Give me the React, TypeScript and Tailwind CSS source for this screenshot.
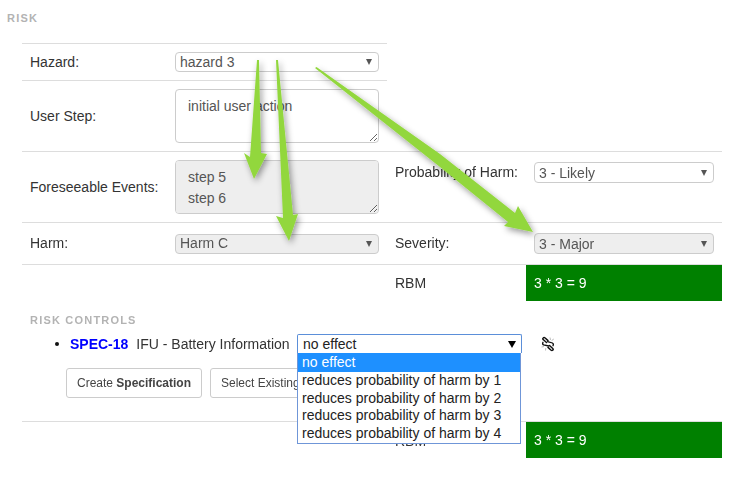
function Sel({ text, gray, w, h = "h-[21px]", low }: { text: string; gray?: boolean; w: string; h?: string; low?: boolean }) {
  return (
    <div className={`flex items-center justify-between rounded-[4px] border border-[#cccccc] pl-1 pr-[6px] text-[14px] text-[#555555] ${w} ${h} ${gray ? "bg-[#eeeeee]" : "bg-white"}`}>
      <span className={low ? "pt-[2px]" : ""}>{text}</span>
      <span className="h-0 w-0 border-x-[3.5px] border-t-[6px] border-x-transparent border-t-[#555555]" />
    </div>
  );
}

function Area({ value, gray, h }: { value: string; gray?: boolean; h: string }) {
  return (
    <textarea
      readOnly
      value={value}
      className={`block w-[204px] rounded-[4px] border border-[#cccccc] px-3 py-[6px] text-[14px] leading-[21px] text-[#555555] outline-none ${h} ${gray ? "bg-[#eeeeee]" : "bg-white"}`}
    />
  );
}

function Green() {
  return <div className="flex h-[36px] w-[196px] items-center bg-[#008000] px-2 text-[14px] text-white">3 * 3 = 9</div>;
}

export default function App() {
  return (
    <div className="relative h-[482px] w-[748px] overflow-hidden bg-white font-['Liberation_Sans',Arial,sans-serif] text-[14px] text-[#333333]">
      <div className="pl-[7px] pt-[12px] text-[11px] font-bold leading-[13px] tracking-[1.2px] text-[#b3b3b3]">RISK</div>

      <div className="ml-[22px] mt-[18px] w-[700px]">
        <div className="flex h-[37px] w-[365px] items-center border-t border-[#dddddd] pl-2">
          <span className="w-[145px]">Hazard:</span>
          <Sel text="hazard 3" w="w-[204px]" h="h-[20px]" />
        </div>
        <div className="flex h-[71px] w-[365px] items-center border-t border-[#dddddd] pl-2">
          <span className="w-[145px]">User Step:</span>
          <Area value="initial user action" h="h-[54px]" />
        </div>
        <div className="flex h-[71px] border-t border-[#dddddd]">
          <div className="flex w-[365px] items-center pl-2">
            <span className="w-[145px]">Foreseeable Events:</span>
            <Area value={"step 5\nstep 6"} gray h="h-[54px]" />
          </div>
          <div className="flex items-start pl-2 pt-[10px]">
            <span className="w-[139px]">Probability of Harm:</span>
            <Sel text="3 - Likely" w="w-[180px]" low />
          </div>
        </div>
        <div className="flex h-[42px] border-t border-[#dddddd]">
          <div className="flex w-[365px] items-center pl-2">
            <span className="w-[145px]">Harm:</span>
            <Sel text="Harm C" gray w="w-[204px]" h="h-[20px]" />
          </div>
          <div className="flex items-start pl-2 pt-[10px]">
            <span className="w-[139px]">Severity:</span>
            <Sel text="3 - Major" gray w="w-[180px]" low />
          </div>
        </div>
        <div className="flex border-t border-[#dddddd]">
          <div className="w-[365px]" />
          <div className="flex w-[335px] items-center pl-2">
            <span className="w-[131px]">RBM</span>
            <Green />
          </div>
        </div>
      </div>

      <div className="ml-[30px] mt-[13px] text-[11px] font-bold leading-[13px] tracking-[1.2px] text-[#b3b3b3]">RISK CONTROLS</div>

      <div className="ml-[55px] mt-[7px] flex h-[20px] items-center">
        <span className="mr-[11px] h-[4px] w-[4px] rounded-full bg-[#111111]" />
        <span className="font-bold text-[#0000ff]">SPEC-18</span>
        <span className="ml-2 w-[169px]">IFU - Battery Information</span>
        <svg className="ml-[235px]" width="16" height="16" viewBox="0 0 16 16" fill="none">
          <path d="M6.5 6.5 L3.5 3.8 Q2.2 2.8 3.2 2 Q4 1.2 5.2 2 L8 4.6" stroke="#111" strokeWidth="1.5" strokeLinecap="round" />
          <path d="M3 6.2 Q2 8 3.6 9 L8.8 10" stroke="#111" strokeWidth="1.3" strokeLinecap="round" />
          <path d="M9.5 9.5 L12.5 12.2 Q13.8 13.4 12.8 14 Q12 14.8 10.8 14 L8 11.4" stroke="#111" strokeWidth="1.5" strokeLinecap="round" />
          <path d="M13 9.8 Q14 8 12.4 7 L7.6 5.6" stroke="#111" strokeWidth="1.3" strokeLinecap="round" />
          <path d="M10 1.5 L10.5 4 M13.8 3 L11.6 4.6 M1.5 11 L4 10.6 M5.5 14.5 L5.8 12" stroke="#bbb" strokeWidth="1" />
        </svg>
      </div>

      <div className="ml-[66px] mt-[14px] flex gap-2">
        <button className="h-[30px] w-[136px] rounded-[3px] border border-[#cccccc] bg-white text-[12px] text-[#444444]">
          Create <b>Specification</b>
        </button>
        <button className="h-[30px] w-[136px] rounded-[3px] border border-[#cccccc] bg-white pl-[10px] text-left text-[12px] text-[#444444]">
          Select Existing
        </button>
      </div>

      <div className="ml-[22px] mt-[23px] flex w-[700px] border-t border-[#dddddd]">
        <div className="w-[365px]" />
        <div className="flex w-[335px] items-center pl-2">
          <span className="w-[131px] pt-[3px]">RBM</span>
          <Green />
        </div>
      </div>

      <div className="absolute left-[297px] top-[334px] w-[225px] text-[14px] text-[#222222]">
        <div className="flex h-[19px] items-center justify-between rounded-t-[2px] border border-b-0 border-[#5b8fd9] bg-white pl-[5px] pr-[5px]">
          <span>no effect</span>
          <span className="h-0 w-0 border-x-[4px] border-t-[7px] border-x-transparent border-t-black" />
        </div>
        <div className="mr-[1px] border border-t-0 border-[#6f96d8] bg-white leading-[17.8px]">
          <div className="bg-[#1e90ff] pl-1 pt-[1px] text-white">no effect</div>
          <div className="pl-1">reduces probability of harm by 1</div>
          <div className="pl-1">reduces probability of harm by 2</div>
          <div className="pl-1">reduces probability of harm by 3</div>
          <div className="pl-1">reduces probability of harm by 4</div>
        </div>
      </div>

      <svg className="pointer-events-none absolute left-0 top-0" width="748" height="482" viewBox="0 0 748 482">
        <defs>
          <filter id="s" x="-40%" y="-20%" width="180%" height="140%">
            <feDropShadow dx="2" dy="3" stdDeviation="3" floodColor="#000" floodOpacity="0.4" />
          </filter>
        </defs>
        <g fill="#92d73e" filter="url(#s)">
          <polygon points="257,60 259,60 261,153 267,154 254,179 244,153 250,157" />
          <polygon points="276,60 278,60 293,215 298,214 289,241 276,216 283,218" />
          <polygon points="315,68 316.5,67 440,154 515,213 518,206 533,232 504,226 508,222 440,167" />
        </g>
      </svg>
    </div>
  );
}
